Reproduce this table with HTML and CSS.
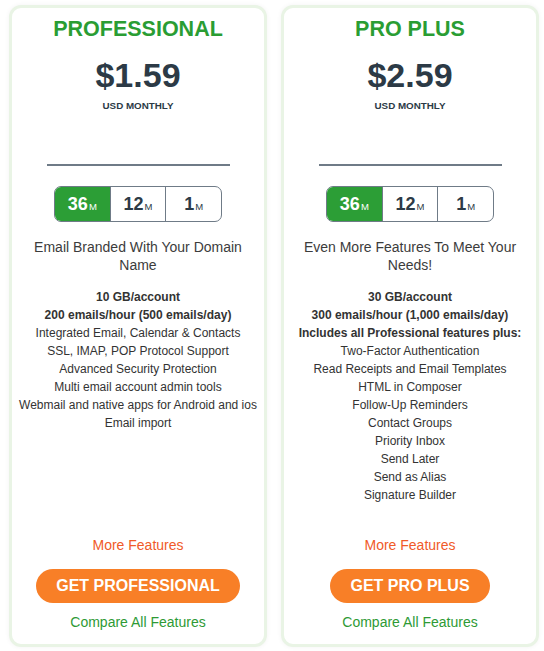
FILE: index.html
```html
<!DOCTYPE html>
<html>
<head>
<meta charset="utf-8">
<link rel="stylesheet" href="styles.css">
</head>
<body>
<div class="plans">
  <div class="card">
    <h2 class="title">PROFESSIONAL</h2>
    <div class="price">$1.59</div>
    <div class="period">USD MONTHLY</div>
    <div class="rule"></div>
    <div class="terms">
      <div class="seg active"><b>36</b><small>M</small></div>
      <div class="seg"><b>12</b><small>M</small></div>
      <div class="seg"><b>1</b><small>M</small></div>
    </div>
    <p class="desc">Email Branded With Your Domain Name</p>
    <ul class="features">
      <li class="strong">10 GB/account</li>
      <li class="strong">200 emails/hour (500 emails/day)</li>
      <li>Integrated Email, Calendar &amp; Contacts</li>
      <li>SSL, IMAP, POP Protocol Support</li>
      <li>Advanced Security Protection</li>
      <li>Multi email account admin tools</li>
      <li>Webmail and native apps for Android and ios</li>
      <li>Email import</li>
    </ul>
    <a class="more">More Features</a>
    <a class="btn">GET PROFESSIONAL</a>
    <a class="compare">Compare All Features</a>
  </div>
  <div class="card">
    <h2 class="title">PRO PLUS</h2>
    <div class="price">$2.59</div>
    <div class="period">USD MONTHLY</div>
    <div class="rule"></div>
    <div class="terms">
      <div class="seg active"><b>36</b><small>M</small></div>
      <div class="seg"><b>12</b><small>M</small></div>
      <div class="seg"><b>1</b><small>M</small></div>
    </div>
    <p class="desc">Even More Features To Meet Your Needs!</p>
    <ul class="features">
      <li class="strong">30 GB/account</li>
      <li class="strong">300 emails/hour (1,000 emails/day)</li>
      <li class="strong">Includes all Professional features plus:</li>
      <li>Two-Factor Authentication</li>
      <li>Read Receipts and Email Templates</li>
      <li>HTML in Composer</li>
      <li>Follow-Up Reminders</li>
      <li>Contact Groups</li>
      <li>Priority Inbox</li>
      <li>Send Later</li>
      <li>Send as Alias</li>
      <li>Signature Builder</li>
    </ul>
    <a class="more">More Features</a>
    <a class="btn">GET PRO PLUS</a>
    <a class="compare">Compare All Features</a>
  </div>
</div>
</body>
</html>
```

FILE: styles.css
```css
* { box-sizing: border-box; }
html, body { margin: 0; padding: 0; background: #fff; }
body {
  font-family: "Liberation Sans", Arial, Helvetica, sans-serif;
  color: #333;
}
.plans {
  display: flex;
  gap: 14px;
  padding: 5px 0 4px 9px;
  align-items: stretch;
}
.card {
  width: 258px;
  height: 642px;
  border: 3px solid #e9f4e5;
  border-radius: 12px;
  box-shadow: 0 0 5px rgba(0,0,0,0.05);
  background: #fff;
  display: flex;
  flex-direction: column;
  align-items: center;
  padding: 8px 0 13px;
  text-align: center;
}
.title {
  margin: 0;
  font-size: 21.5px;
  line-height: 26px;
  font-weight: bold;
  color: #2a9d33;
}
.price {
  margin-top: 13px;
  font-size: 34px;
  line-height: 40px;
  font-weight: bold;
  color: #2c3a46;
}
.period {
  margin-top: 5px;
  font-size: 9.8px;
  line-height: 12px;
  font-weight: bold;
  color: #2c3a46;
}
.rule {
  margin-top: 52px;
  width: 183px;
  height: 2px;
  background: #6f7b87;
}
.terms {
  margin-top: 20px;
  display: flex;
  width: 168px;
  height: 36px;
  border: 1px solid #6f7b87;
  border-radius: 7px;
  overflow: hidden;
}
.seg {
  flex: 1;
  display: flex;
  align-items: center;
  justify-content: center;
  color: #2c3a46;
  border-left: 1px solid #6f7b87;
}
.seg:first-child { border-left: none; }
.seg b {
  font-size: 18px;
  font-weight: bold;
  line-height: 1;
}
.seg small {
  font-size: 9.5px;
  margin-left: 1px;
  margin-top: 5px;
  line-height: 1;
}
.seg.active {
  background: #2c9e36;
  color: #fff;
}
.desc {
  margin: 16px 0 0;
  padding: 0 14px;
  font-size: 14px;
  line-height: 18px;
  color: #3c3c3c;
}
.features {
  list-style: none;
  margin: 14px 0 0;
  padding: 0;
  font-size: 12px;
  line-height: 18px;
  color: #333;
}
.features .strong { font-weight: bold; }
.more {
  margin-top: auto;
  font-size: 14px;
  line-height: 18px;
  color: #f05a28;
}
.btn {
  margin-top: 15px;
  height: 34px;
  line-height: 34px;
  padding: 0 20px;
  border-radius: 17px;
  background: #f87f27;
  color: #fff;
  font-size: 16px;
  font-weight: bold;
}
.compare {
  margin-top: 10px;
  font-size: 14px;
  line-height: 18px;
  color: #2e9a35;
}
```
